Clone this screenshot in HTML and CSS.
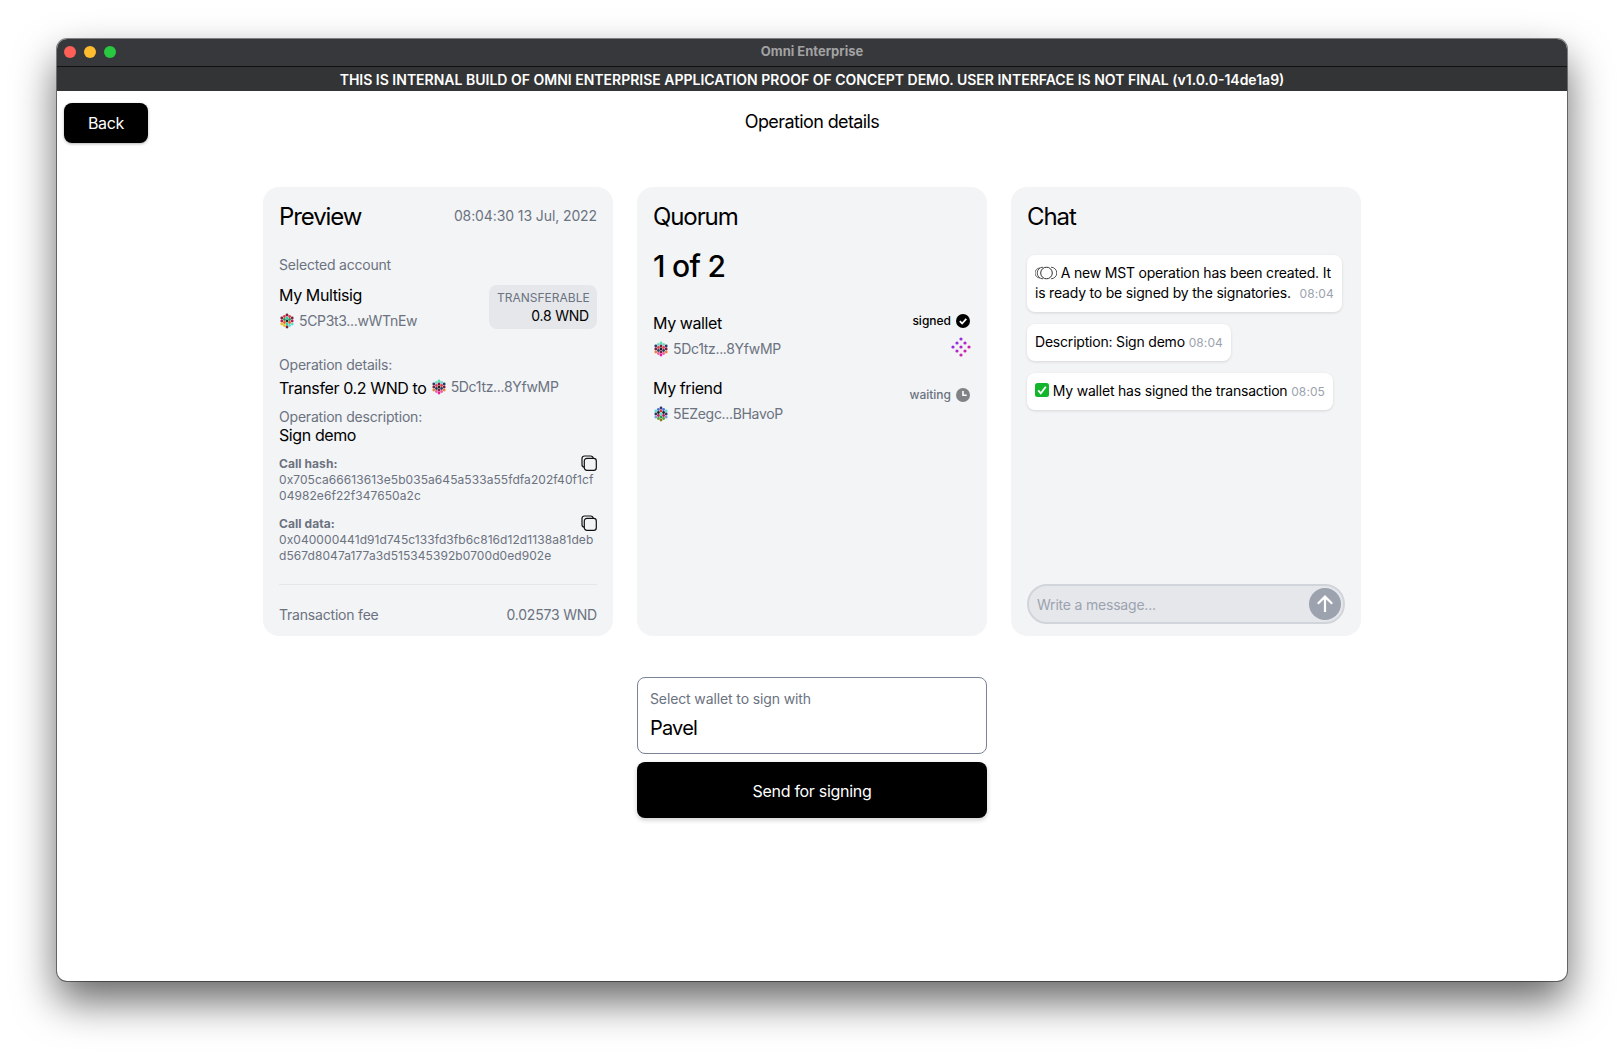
FILE: index.html
```html
<!DOCTYPE html>
<html>
<head>
  <title>Omni Enterprise</title>
  <link rel="stylesheet" href="styles.css">
</head>
<body>

<svg class="defs" width="0" height="0">
  <symbol id="copy" viewBox="0 0 16 16">
    <path d="M3.2 12.2C1.9 12 1 11 1 9.700V3.500C1 2.100 2.100 1 3.500 1h6.200c1.300 0 2.300.9 2.500 2.200" fill="none" stroke="currentColor" stroke-width="1.200"/>
    <rect x="3.300" y="3.300" width="12" height="12" rx="2.600" fill="none" stroke="currentColor" stroke-width="1.200"/>
  </symbol>
</svg>

<div class="window">
  <div class="titlebar">
    <div class="lights">
      <span class="light red"></span>
      <span class="light yellow"></span>
      <span class="light green"></span>
    </div>
    Omni Enterprise
  </div>
  <div class="banner">THIS IS INTERNAL BUILD OF OMNI ENTERPRISE APPLICATION PROOF OF CONCEPT DEMO. USER INTERFACE IS NOT FINAL (v1.0.0-14de1a9)</div>

  <div class="content">
    <div class="page-head">
      <button class="back">Back</button>
      <h1>Operation details</h1>
    </div>

    <div class="cards">
      <section class="card">
        <div class="card-head">
          <h2>Preview</h2>
          <span class="date">08:04:30 13 Jul, 2022</span>
        </div>

        <div class="muted selected-label">Selected account</div>
        <div class="account-row">
          <div>
            <div class="name">My Multisig</div>
            <div class="address">
              <svg class="identicon" viewBox="0 0 16 16">
                <circle cx="8" cy="2" r="1.400" fill="#7a1f3d"/><circle cx="8" cy="5" r="1.400" fill="#2bd4b4"/><circle cx="8" cy="8" r="1.400" fill="#222"/><circle cx="8" cy="11" r="1.400" fill="#2bd4b4"/><circle cx="8" cy="14" r="1.400" fill="#7a1f3d"/>
                <circle cx="5.400" cy="3.500" r="1.400" fill="#e33b4e"/><circle cx="5.400" cy="6.500" r="1.400" fill="#1f9d55"/><circle cx="5.400" cy="9.500" r="1.400" fill="#f05a28"/><circle cx="5.400" cy="12.500" r="1.400" fill="#e6c229"/>
                <circle cx="10.600" cy="3.500" r="1.400" fill="#e33b4e"/><circle cx="10.600" cy="6.500" r="1.400" fill="#1f9d55"/><circle cx="10.600" cy="9.500" r="1.400" fill="#f05a28"/><circle cx="10.600" cy="12.500" r="1.400" fill="#5de0d0"/>
                <circle cx="2.800" cy="5" r="1.400" fill="#7a1f3d"/><circle cx="2.800" cy="8" r="1.400" fill="#c2185b"/><circle cx="2.800" cy="11" r="1.400" fill="#e6c229"/>
                <circle cx="13.200" cy="5" r="1.400" fill="#7a1f3d"/><circle cx="13.200" cy="8" r="1.400" fill="#c2185b"/><circle cx="13.200" cy="11" r="1.400" fill="#5de0d0"/>
              </svg>
              5CP3t3...wWTnEw
            </div>
          </div>
          <div class="balance">
            <div class="balance-label">TRANSFERABLE</div>
            <div class="balance-value">0.8 WND</div>
          </div>
        </div>

        <div class="muted op-label">Operation details:</div>
        <div class="transfer">
          Transfer 0.2 WND to
          <span class="address inline">
            <svg class="identicon" viewBox="0 0 16 16">
              <circle cx="8" cy="2" r="1.400" fill="#5de0b0"/><circle cx="8" cy="5" r="1.400" fill="#7a1f3d"/><circle cx="8" cy="8" r="1.400" fill="#222"/><circle cx="8" cy="11" r="1.400" fill="#7a1f3d"/><circle cx="8" cy="14" r="1.400" fill="#e91ea0"/>
              <circle cx="5.400" cy="3.500" r="1.400" fill="#6fd8c8"/><circle cx="5.400" cy="6.500" r="1.400" fill="#e33b4e"/><circle cx="5.400" cy="9.500" r="1.400" fill="#2b3a67"/><circle cx="5.400" cy="12.500" r="1.400" fill="#f05aa0"/>
              <circle cx="10.600" cy="3.500" r="1.400" fill="#6fd8c8"/><circle cx="10.600" cy="6.500" r="1.400" fill="#e33b4e"/><circle cx="10.600" cy="9.500" r="1.400" fill="#2b3a67"/><circle cx="10.600" cy="12.500" r="1.400" fill="#f05aa0"/>
              <circle cx="2.800" cy="5" r="1.400" fill="#2b3a67"/><circle cx="2.800" cy="8" r="1.400" fill="#7a1f3d"/><circle cx="2.800" cy="11" r="1.400" fill="#e8833a"/>
              <circle cx="13.200" cy="5" r="1.400" fill="#2b3a67"/><circle cx="13.200" cy="8" r="1.400" fill="#7a1f3d"/><circle cx="13.200" cy="11" r="1.400" fill="#e8833a"/>
            </svg>
            5Dc1tz...8YfwMP
          </span>
        </div>

        <div class="muted desc-label">Operation description:</div>
        <div class="name desc">Sign demo</div>

        <div class="call">
          <div class="call-head"><b>Call hash:</b><svg class="copy"><use href="#copy"/></svg></div>
          <div class="hash">0x705ca66613613e5b035a645a533a55fdfa202f40f1cf<br>04982e6f22f347650a2c</div>
        </div>
        <div class="call">
          <div class="call-head"><b>Call data:</b><svg class="copy"><use href="#copy"/></svg></div>
          <div class="hash">0x040000441d91d745c133fd3fb6c816d12d1138a81deb<br>d567d8047a177a3d515345392b0700d0ed902e</div>
        </div>

        <div class="fee">
          <span>Transaction fee</span>
          <span>0.02573 WND</span>
        </div>
      </section>

      <section class="card">
        <div class="card-head">
          <h2>Quorum</h2>
        </div>
        <div class="quorum-count">1 of 2</div>

        <div class="signer">
          <div>
            <div class="name">My wallet</div>
            <div class="address">
              <svg class="identicon" viewBox="0 0 16 16">
                <circle cx="8" cy="2" r="1.400" fill="#5de0b0"/><circle cx="8" cy="5" r="1.400" fill="#7a1f3d"/><circle cx="8" cy="8" r="1.400" fill="#222"/><circle cx="8" cy="11" r="1.400" fill="#7a1f3d"/><circle cx="8" cy="14" r="1.400" fill="#e91ea0"/>
                <circle cx="5.400" cy="3.500" r="1.400" fill="#6fd8c8"/><circle cx="5.400" cy="6.500" r="1.400" fill="#e33b4e"/><circle cx="5.400" cy="9.500" r="1.400" fill="#2b3a67"/><circle cx="5.400" cy="12.500" r="1.400" fill="#f05aa0"/>
                <circle cx="10.600" cy="3.500" r="1.400" fill="#6fd8c8"/><circle cx="10.600" cy="6.500" r="1.400" fill="#e33b4e"/><circle cx="10.600" cy="9.500" r="1.400" fill="#2b3a67"/><circle cx="10.600" cy="12.500" r="1.400" fill="#f05aa0"/>
                <circle cx="2.800" cy="5" r="1.400" fill="#2b3a67"/><circle cx="2.800" cy="8" r="1.400" fill="#7a1f3d"/><circle cx="2.800" cy="11" r="1.400" fill="#e8833a"/>
                <circle cx="13.200" cy="5" r="1.400" fill="#2b3a67"/><circle cx="13.200" cy="8" r="1.400" fill="#7a1f3d"/><circle cx="13.200" cy="11" r="1.400" fill="#e8833a"/>
              </svg>
              5Dc1tz...8YfwMP
            </div>
          </div>
          <div class="signer-side">
            <div class="status signed">
              signed
              <svg class="status-icon" viewBox="0 0 14 14">
                <circle cx="7" cy="7" r="7" fill="#000"/>
                <path d="M3.800 7.200l2.300 2.300 4.200-4.600" fill="none" stroke="#fff" stroke-width="1.800"/>
              </svg>
            </div>
            <svg class="network" viewBox="0 0 20 20">
              <defs>
                <linearGradient id="net" gradientUnits="userSpaceOnUse" x1="2" y1="2" x2="18" y2="18">
                  <stop offset="0" stop-color="#7c2ff0"/>
                  <stop offset="1" stop-color="#e6209a"/>
                </linearGradient>
              </defs>
              <g fill="url(#net)">
                <circle cx="10" cy="2" r="1.600"/><circle cx="6" cy="6" r="1.600"/><circle cx="14" cy="6" r="1.600"/><circle cx="2" cy="10" r="1.600"/><circle cx="10" cy="10" r="1.600"/><circle cx="18" cy="10" r="1.600"/><circle cx="6" cy="14" r="1.600"/><circle cx="14" cy="14" r="1.600"/><circle cx="10" cy="18" r="1.600"/>
              </g>
            </svg>
          </div>
        </div>

        <div class="signer friend">
          <div>
            <div class="name">My friend</div>
            <div class="address">
              <svg class="identicon" viewBox="0 0 16 16">
                <circle cx="8" cy="2" r="1.400" fill="#2b3a67"/><circle cx="8" cy="5" r="1.400" fill="#e33b4e"/><circle cx="8" cy="8" r="1.400" fill="#5de0d0"/><circle cx="8" cy="11" r="1.400" fill="#1f9d55"/><circle cx="8" cy="14" r="1.400" fill="#8a7a20"/>
                <circle cx="5.400" cy="3.500" r="1.400" fill="#4a6fd8"/><circle cx="5.400" cy="6.500" r="1.400" fill="#222"/><circle cx="5.400" cy="9.500" r="1.400" fill="#c2185b"/><circle cx="5.400" cy="12.500" r="1.400" fill="#5da02b"/>
                <circle cx="10.600" cy="3.500" r="1.400" fill="#4a6fd8"/><circle cx="10.600" cy="6.500" r="1.400" fill="#222"/><circle cx="10.600" cy="9.500" r="1.400" fill="#c2185b"/><circle cx="10.600" cy="12.500" r="1.400" fill="#5da02b"/>
                <circle cx="2.800" cy="5" r="1.400" fill="#5de0d0"/><circle cx="2.800" cy="8" r="1.400" fill="#2b3a67"/><circle cx="2.800" cy="11" r="1.400" fill="#7a9ad8"/>
                <circle cx="13.200" cy="5" r="1.400" fill="#5de0d0"/><circle cx="13.200" cy="8" r="1.400" fill="#2b3a67"/><circle cx="13.200" cy="11" r="1.400" fill="#7a9ad8"/>
              </svg>
              5EZegc...BHavoP
            </div>
          </div>
          <div class="status waiting">
            waiting
            <svg class="status-icon" viewBox="0 0 14 14">
              <circle cx="7" cy="7" r="7" fill="#808285"/>
              <path d="M7 3v4.300h3.700" fill="none" stroke="#fff" stroke-width="1.600"/>
            </svg>
          </div>
        </div>
      </section>

      <section class="card chat">
        <div class="card-head">
          <h2>Chat</h2>
        </div>
        <div class="messages">
          <div class="message">
            <svg class="rings" viewBox="0 0 22 14">
              <g fill="none" stroke-width="1">
                <path d="M5 2a5 5 0 0 0 0 10" stroke="#666"/>
                <path d="M8 1.200a5.800 5.800 0 0 0 0 11.600" stroke="#555"/>
                <circle cx="11.500" cy="7" r="5.800" stroke="#333"/>
                <path d="M16 1.200a5.800 5.800 0 0 1 0 11.600" stroke="#555"/>
              </g>
            </svg>
            A new MST operation has been created. It is ready to be signed by the signatories. <time class="first-time">08:04</time>
          </div>
          <div class="message">Description: Sign demo <time>08:04</time></div>
          <div class="message">
            <svg class="tick" viewBox="0 0 14 14">
              <rect width="14" height="14" rx="2.500" fill="#12b52c"/>
              <path d="M3.200 7.300l2.600 3 5-6.600" fill="none" stroke="#fff" stroke-width="1.800"/>
            </svg>
            My wallet has signed the transaction <time>08:05</time>
          </div>
        </div>
        <div class="chat-input">
          <span class="placeholder">Write a message...</span>
          <span class="send">
            <svg viewBox="0 0 20 20" width="20" height="20">
              <path d="M10 18V3M2.800 9.800L10 2.600l7.200 7.200" fill="none" stroke="#fff" stroke-width="2.200"/>
            </svg>
          </span>
        </div>
      </section>
    </div>

    <div class="sign-box">
      <div class="wallet-select">
        <div class="muted">Select wallet to sign with</div>
        <div class="wallet-name">Pavel</div>
      </div>
      <button class="send-signing">Send for signing</button>
    </div>
  </div>
</div>

</body>
</html>
```

FILE: styles.css
```css
* {
  box-sizing: border-box;
}

body {
  margin: 0;
  height: 1056px;
  padding: 39px 57px 0;
  overflow: hidden;
  background-color: white;
  font-family: Inter, "Liberation Sans", sans-serif;
  letter-spacing: -0.2px;
  color: #000;
}

.defs {
  position: absolute;
}

.window {
  height: 942px;
  display: flex;
  flex-direction: column;
  border-radius: 10px;
  background-color: white;
  box-shadow: 0 0 0 1px rgba(0, 0, 0, 0.45), 0 20px 42px rgba(0, 0, 0, 0.6); /* macOS window shadow */
}

.titlebar {
  position: relative;
  height: 28px;
  padding-bottom: 4px;
  display: flex;
  align-items: center;
  justify-content: center;
  background-color: #37383b;
  border-radius: 10px 10px 0 0;
  border-bottom: 1px solid #111;
  color: #a2a2a3;
  font-size: 13px;
  font-weight: 700;
  letter-spacing: 0;
}

.lights {
  position: absolute;
  left: 7px;
  top: 7px;
  display: flex;
  gap: 8px;
}

.light {
  width: 12px;
  height: 12px;
  border-radius: 50%;
}

.red { background-color: #ff5f57; }
.yellow { background-color: #febc2e; }
.green { background-color: #28c840; }

.banner {
  height: 24px;
  background-color: #333436;
  color: white;
  font-size: 14px;
  font-weight: 600;
  line-height: 25px;
  letter-spacing: 0;
  text-align: center;
}

.content {
  flex: 1;
  border-radius: 0 0 10px 10px;
}

.page-head {
  position: relative;
  height: 96px;
  padding: 12px 7px 0;
}

.page-head h1 {
  margin: 0;
  position: absolute;
  left: 0;
  right: 0;
  top: 18px;
  text-align: center;
  font-size: 18px;
  line-height: 26px;
  font-weight: 400;
  letter-spacing: -0.6px;
}

.back {
  width: 84px;
  height: 40px;
  border: none;
  border-radius: 8px;
  background-color: #000;
  color: white;
  font-family: inherit;
  font-size: 16px;
  font-weight: 400;
  letter-spacing: -0.3px;
  box-shadow: 0 1px 3px rgba(0, 0, 0, 0.3);
}

.cards {
  display: flex;
  justify-content: center;
  gap: 24px;
}

.card {
  width: 350px;
  height: 449px;
  padding: 16px;
  border-radius: 16px;
  background-color: #f3f4f6;
}

.card-head {
  display: flex;
  justify-content: space-between;
  align-items: center;
  height: 26px;
}

.card-head h2 {
  margin: 1px 0 0;
  font-size: 24px;
  font-weight: 400;
  line-height: 26px;
  letter-spacing: -1.1px;
}

.date {
  margin-top: -2px;
  font-size: 14px;
  letter-spacing: -0.1px;
  color: #6b7280;
}

.muted {
  font-size: 14px;
  line-height: 20px;
  color: #6b7280;
}

.name {
  font-size: 16px;
  line-height: 24px;
  letter-spacing: -0.4px;
}

.selected-label {
  margin-top: 26px;
}

.account-row {
  display: flex;
  justify-content: space-between;
  margin-top: 8px;
}

.address {
  display: flex;
  align-items: center;
  gap: 4px;
  font-size: 14px;
  line-height: 20px;
  letter-spacing: -0.32px;
  color: #6b7280;
  margin-top: 4px;
}

.address.inline {
  display: inline-flex;
  margin: 0;
  vertical-align: -1px;
}

.identicon {
  width: 16px;
  height: 16px;
  flex-shrink: 0;
}

.balance {
  width: 108px;
  height: 44px;
  margin-top: 2px;
  padding: 4px 8px;
  border-radius: 8px;
  background-color: #e5e7eb;
  text-align: right;
}

.balance-label {
  font-size: 12px;
  line-height: 17px;
  letter-spacing: 0;
  color: #6b7280;
}

.balance-value {
  font-size: 14px;
  line-height: 20px;
}

.op-label {
  margin-top: 24px;
}

.transfer {
  margin-top: 1px;
  font-size: 16px;
  line-height: 24px;
  letter-spacing: -0.38px;
}

.desc-label {
  margin-top: 7px;
}

.desc {
  margin-top: -2px;
  line-height: 20px;
}

.call {
  margin-top: 11px;
  font-size: 12px;
  line-height: 16px;
  letter-spacing: 0.07px;
  color: #6b7280;
}

.call + .call {
  margin-top: 12px;
}

.call-head {
  display: flex;
  justify-content: space-between;
  height: 16px;
}

.call-head b {
  font-weight: 700;
}

.copy {
  width: 16px;
  height: 16px;
  margin-top: -1px;
  color: #111;
}

.hash {
  white-space: nowrap;
}

.fee {
  display: flex;
  justify-content: space-between;
  margin-top: 20px;
  padding-top: 20px;
  border-top: 1px solid #e5e7eb;
  font-size: 14px;
  line-height: 20px;
  color: #6b7280;
}

.quorum-count {
  margin-top: 19px;
  font-size: 30px;
  line-height: 36px;
  font-weight: 500;
  letter-spacing: -0.7px;
}

.signer {
  display: flex;
  justify-content: space-between;
  margin-top: 27px;
}

.friend {
  margin-top: 17px;
}

.signer-side {
  display: flex;
  flex-direction: column;
  align-items: flex-end;
  gap: 8px;
}

.status {
  display: flex;
  align-items: center;
  gap: 5px;
  font-size: 12px;
  line-height: 16px;
  font-weight: 500;
  letter-spacing: 0;
}

.status-icon {
  width: 14px;
  height: 14px;
  margin-right: 1px;
}

.signed {
  margin-top: 2px;
}

.waiting {
  margin-top: 7px;
  height: 24px;
  color: #6b7280;
}

.network {
  width: 20px;
  height: 20px;
}

.chat {
  display: flex;
  flex-direction: column;
  padding-bottom: 12px;
}

.messages {
  flex: 1;
  display: flex;
  flex-direction: column;
  align-items: flex-start;
  gap: 12px;
  margin-top: 26px;
}

.message {
  max-width: 315px;
  padding: 8px;
  border-radius: 8px;
  background-color: white;
  box-shadow: 0 1px 3px rgba(0, 0, 0, 0.12);
  font-size: 14px;
  line-height: 20px;
}

.message time {
  font-size: 12px;
  letter-spacing: 0.1px;
  color: #9ca3af;
}

.first-time {
  margin-left: 5px;
}

.rings {
  width: 22px;
  height: 14px;
  vertical-align: -2px;
}

.tick {
  width: 14px;
  height: 14px;
  vertical-align: -1px;
}

.chat-input {
  display: flex;
  align-items: center;
  justify-content: space-between;
  width: 318px;
  height: 40px;
  padding: 0 2px 0 8px;
  border: 2px solid #d1d5db;
  border-radius: 20px;
  background-color: #e5e7eb;
  font-size: 14px;
}

.placeholder {
  color: #9ca3af;
}

.send {
  display: flex;
  align-items: center;
  justify-content: center;
  width: 32px;
  height: 32px;
  border-radius: 50%;
  background-color: #9ca3af;
}

.sign-box {
  width: 350px;
  margin: 41px auto 0;
}

.wallet-select {
  height: 77px;
  padding: 11px 12px;
  border: 1px solid #7b8398;
  border-radius: 8px;
}

.wallet-select .muted {
  letter-spacing: -0.12px;
}

.wallet-name {
  margin-top: 5px;
  font-size: 20px;
  line-height: 28px;
  letter-spacing: -0.8px;
}

.send-signing {
  width: 100%;
  height: 56px;
  margin-top: 8px;
  padding-top: 2px;
  border: none;
  border-radius: 8px;
  background-color: #000;
  color: white;
  font-family: inherit;
  font-size: 16px;
  font-weight: 400;
  letter-spacing: -0.3px;
  box-shadow: 0 2px 5px rgba(0, 0, 0, 0.2);
}
```
